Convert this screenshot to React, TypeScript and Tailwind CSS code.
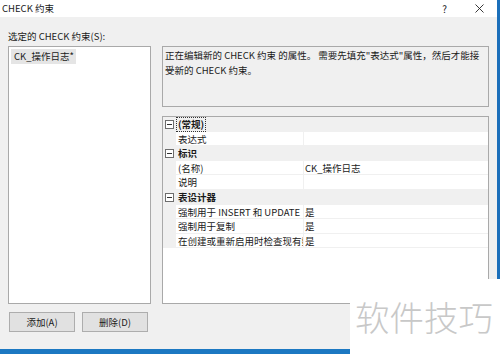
import React from "react";

const font = { fontFamily: '"Noto Sans CJK SC", "Noto Sans", sans-serif' };

function Minus() {
  return (
    <svg width="9" height="9" viewBox="0 0 9 9" className="block">
      <rect x="0.5" y="0.5" width="8" height="8" fill="#ffffff" stroke="#6d6d6d" strokeWidth="1" />
      <line x1="2" y1="4.5" x2="7" y2="4.5" stroke="#333" strokeWidth="1" />
    </svg>
  );
}

type Row = { kind: "cat"; name: string; focus?: boolean } | { kind: "prop"; name: string; value?: string };

const rows: Row[] = [
  { kind: "cat", name: "(常规)", focus: true },
  { kind: "prop", name: "表达式" },
  { kind: "cat", name: "标识" },
  { kind: "prop", name: "(名称)", value: "CK_操作日志" },
  { kind: "prop", name: "说明" },
  { kind: "cat", name: "表设计器" },
  { kind: "prop", name: "强制用于 INSERT 和 UPDATE", value: "是" },
  { kind: "prop", name: "强制用于复制", value: "是" },
  { kind: "prop", name: "在创建或重新启用时检查现有数据", value: "是" },
];

export default function App() {
  return (
    <div className="relative w-[500px] h-[354px] overflow-hidden bg-[#f0f0f0] text-[9.5px] text-[#1a1a1a]" style={font}>
      <div className="flex flex-col h-full">
        <div className="flex flex-1 min-h-0">
          <div className="flex flex-col w-[497px]">
            {/* title bar */}
            <div className="h-[17px] bg-white flex items-center pl-[2px] relative">
              <span className="leading-[17px]">CHECK 约束</span>
              <div className="ml-auto flex items-center gap-[28px] pr-[13px]">
                <span className="text-[10px] leading-none">?</span>
                <svg width="9" height="9" viewBox="0 0 9 9" className="block">
                  <line x1="0.5" y1="0.5" x2="8.5" y2="8.5" stroke="#222" strokeWidth="0.9" />
                  <line x1="8.5" y1="0.5" x2="0.5" y2="8.5" stroke="#222" strokeWidth="0.9" />
                </svg>
              </div>
            </div>
            {/* body */}
            <div className="flex-1 pl-[8px] pt-[13px]">
              <div className="h-[12px] leading-[12px] mb-[4px]">选定的 CHECK 约束(S):</div>
              <div className="flex gap-[11px]">
                <div className="w-[143px] h-[258px] bg-white border border-[#a9a9a9] p-[2px]">
                  <div className="inline-block bg-[#e5e5e5] pl-[3px] pr-[2px] h-[15px] leading-[15px]">CK_操作日志*</div>
                </div>
                <div className="w-[327px] flex flex-col gap-[9px]">
                  <div className="h-[61px] border border-[#a9a9a9] bg-[#f0f0f0] px-[2px] pt-[1px] leading-[15px] whitespace-nowrap">
                    <div>正在编辑新的 CHECK 约束 的属性。 需要先填充"表达式"属性，然后才能接</div>
                    <div>受新的 CHECK 约束。</div>
                  </div>
                  <div className="h-[188px] border border-[#a9a9a9] bg-white flex flex-col">
                    {rows.map((r, i) =>
                      r.kind === "cat" ? (
                        <div key={i} className="h-[14.6px] flex items-center bg-[#f0f0f0] shrink-0">
                          <div className="w-[13px] flex justify-center">
                            <Minus />
                          </div>
                          <div className={"font-bold leading-[13px] px-[1px] " + (r.focus ? "border border-dotted border-[#333]" : "border border-transparent")}>
                            {r.name}
                          </div>
                        </div>
                      ) : (
                        <div key={i} className="h-[14.6px] flex shrink-0">
                          <div className="w-[13px] bg-[#f0f0f0]" />
                          <div className="w-[127px] border-b border-[#f0f0f0] pl-[2px] overflow-hidden whitespace-nowrap leading-[14px]">
                            {r.name}
                          </div>
                          <div className="w-px bg-[#f0f0f0]" />
                          <div className="flex-1 border-b border-[#f0f0f0] pl-[1px] whitespace-nowrap leading-[14px]">
                            {r.value ?? ""}
                          </div>
                        </div>
                      )
                    )}
                  </div>
                </div>
              </div>
              <div className="flex gap-[7px] mt-[8px] pl-[1px]">
                <button className="w-[66px] h-[20px] bg-[#e1e1e1] border border-[#adadad] leading-[18px] text-center">添加(A)</button>
                <button className="w-[66px] h-[20px] bg-[#e1e1e1] border border-[#adadad] leading-[18px] text-center">删除(D)</button>
              </div>
            </div>
          </div>
          <div className="w-[3px] bg-[#1b6fba]" />
        </div>
        <div className="h-[5px] bg-[#1c78c2]" />
      </div>
      {/* watermark overlay */}
      <div className="absolute left-[350px] top-[279px] w-[150px] h-[75px] bg-white flex items-center pl-[5px]">
        <span className="text-[34.5px] font-light text-[#c8c8c8] leading-none tracking-[0px]" style={font}>软件技巧</span>
      </div>
    </div>
  );
}
